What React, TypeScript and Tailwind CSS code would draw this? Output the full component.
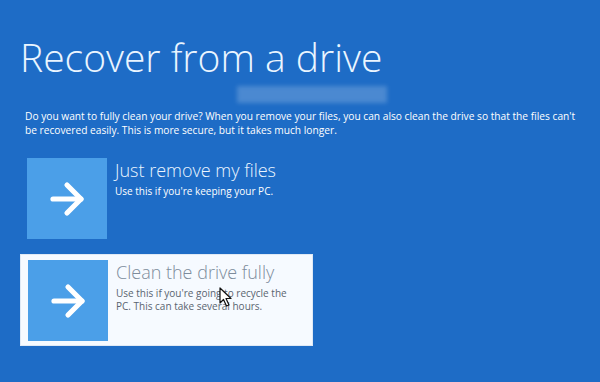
import { ArrowRight } from "lucide-react";

function Option({
  title,
  lines,
  active,
}: {
  title: string;
  lines: string[];
  active?: boolean;
}) {
  return (
    <div
      className={`flex w-[293px] h-[92px] py-[5px] pl-[7px] gap-[8px] ${
        active ? "bg-[#f6faff] border border-[#dfe9f5]" : ""
      }`}
    >
      <div className="w-[80px] h-[81px] shrink-0 bg-[#4b9fe8] flex items-center justify-center">
        <ArrowRight className="w-[48px] h-[48px] text-white" strokeWidth={2.6} />
      </div>
      <div className="pt-[1px]">
        <div
          className={`text-[18px] font-light leading-[22px] ${
            active ? "text-[#7d8c9c]" : "text-[#eaf5ff]"
          }`}
        >
          {title}
        </div>
        <div
          className={`mt-[4px] text-[10px] leading-[13px] ${
            active ? "text-[#5a6470]" : "text-white"
          }`}
        >
          {lines.map((l) => (
            <div key={l} className="whitespace-nowrap">
              {l}
            </div>
          ))}
        </div>
      </div>
    </div>
  );
}

export default function App() {
  return (
    <div className="relative w-[600px] h-[382px] overflow-hidden bg-[#1e6cc6] font-['Open_Sans',sans-serif]">
      {/* blurred smudge under the title */}
      <div className="absolute left-[237px] top-[86px] w-[150px] h-[17px] bg-white/20 blur-[2px]" />

      <div className="pl-[20px] pt-[37px]">
        <h1 className="text-[39px] font-light leading-none text-[#eaf5ff]">
          Recover from a drive
        </h1>

        <p className="mt-[33px] pl-[5px] text-[10.2px] leading-[14px] text-white">
          <span className="block whitespace-nowrap">
            Do you want to fully clean your drive? When you remove your files, you can also clean the drive so that the files can't
          </span>
          <span className="block whitespace-nowrap">
            be recovered easily. This is more secure, but it takes much longer.
          </span>
        </p>

        <div className="mt-[16px] flex flex-col gap-[9px]">
          <Option title="Just remove my files" lines={["Use this if you're keeping your PC."]} />
          <Option
            title="Clean the drive fully"
            lines={["Use this if you're going to recycle the", "PC. This can take several hours."]}
            active
          />
        </div>
      </div>

      {/* mouse pointer */}
      <svg
        className="absolute left-[219px] top-[287px]"
        width="14"
        height="20"
        viewBox="0 0 14 20"
      >
        <path
          d="M1 1 L1 16 L4.5 12.5 L7.5 19 L10 18 L7 11.5 L12 11.5 Z"
          fill="#ffffff"
          stroke="#111111"
          strokeWidth="1.2"
          strokeLinejoin="round"
        />
      </svg>
    </div>
  );
}
